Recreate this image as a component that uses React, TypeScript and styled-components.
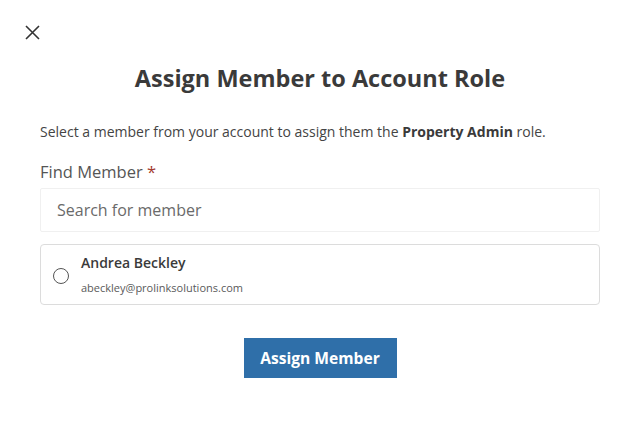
import React from "react";
import styled, { createGlobalStyle } from "styled-components";

const Global = createGlobalStyle`
  html, body { margin: 0; padding: 0; background: #fff; }
  body { font-family: "Open Sans", "Noto Sans", sans-serif; color: #333; }
  * { box-sizing: border-box; }
`;

const Modal = styled.div`
  width: 640px;
  height: 426px;
  background: #fff;
  display: flex;
  flex-direction: column;
  padding: 22px 40px 0 40px;
`;

const CloseButton = styled.button`
  width: 20px;
  height: 20px;
  margin-left: -18px;
  padding: 0;
  border: none;
  background: transparent;
  display: flex;
  align-items: center;
  justify-content: center;
  color: #333;
  cursor: pointer;
`;

const Title = styled.h1`
  margin: 21px 0 0 0;
  text-align: center;
  font-size: 23.5px;
  line-height: 30px;
  font-weight: 700;
  color: #3a3a3a;
`;

const Description = styled.p`
  margin: 29px 0 0 0;
  font-size: 14px;
  line-height: 20px;
  color: #444;
  b { font-weight: 700; color: #3a3a3a; }
`;

const Label = styled.label`
  margin-top: 19px;
  font-size: 16.5px;
  line-height: 22px;
  color: #555;
  display: block;
`;

const Required = styled.span`
  color: #a33a2e;
`;

const SearchInput = styled.input`
  margin-top: 5px;
  width: 560px;
  height: 44px;
  border: 1px solid #f0f0f0;
  border-radius: 2px;
  padding: 0 16px;
  font-family: "Open Sans", sans-serif;
  font-size: 16px;
  color: #333;
  outline: none;
  &::placeholder { color: #6a6a6a; }
`;

const MemberCard = styled.label`
  margin-top: 12px;
  width: 560px;
  height: 61px;
  border: 1px solid #dcdcdc;
  border-radius: 4px;
  display: flex;
  align-items: center;
  padding: 0 0 0 12px;
  gap: 12px;
  cursor: pointer;
`;

const Radio = styled.span`
  width: 16px;
  height: 16px;
  border: 1.3px solid #555;
  border-radius: 50%;
  flex: none;
  margin-top: 2px;
`;

const MemberInfo = styled.div`
  display: flex;
  flex-direction: column;
`;

const MemberName = styled.span`
  font-size: 14px;
  line-height: 20px;
  font-weight: 550;
  color: #3a3a3a;
`;

const MemberEmail = styled.span`
  margin-top: 7px;
  font-size: 11px;
  line-height: 16px;
  color: #5a5a5a;
`;

const Actions = styled.div`
  margin-top: 33px;
  display: flex;
  justify-content: center;
`;

const PrimaryButton = styled.button`
  width: 153px;
  height: 40px;
  background: #2f6fa9;
  color: #fff;
  border: none;
  border-radius: 0;
  font-family: "Open Sans", sans-serif;
  font-size: 15.6px;
  font-weight: 700;
  cursor: pointer;
`;

export default function App() {
  return (
    <>
      <Global />
      <Modal>
        <CloseButton aria-label="Close">
          <svg width="15" height="15" viewBox="0 0 15 15">
            <path d="M1 1 L14 14 M14 1 L1 14" stroke="#333" strokeWidth="1.6" fill="none" />
          </svg>
        </CloseButton>
        <Title>Assign Member to Account Role</Title>
        <Description>
          Select a member from your account to assign them the <b>Property Admin</b> role.
        </Description>
        <Label>
          Find Member <Required>*</Required>
        </Label>
        <SearchInput placeholder="Search for member" />
        <MemberCard>
          <Radio />
          <MemberInfo>
            <MemberName>Andrea Beckley</MemberName>
            <MemberEmail>abeckley@prolinksolutions.com</MemberEmail>
          </MemberInfo>
        </MemberCard>
        <Actions>
          <PrimaryButton>Assign Member</PrimaryButton>
        </Actions>
      </Modal>
    </>
  );
}
